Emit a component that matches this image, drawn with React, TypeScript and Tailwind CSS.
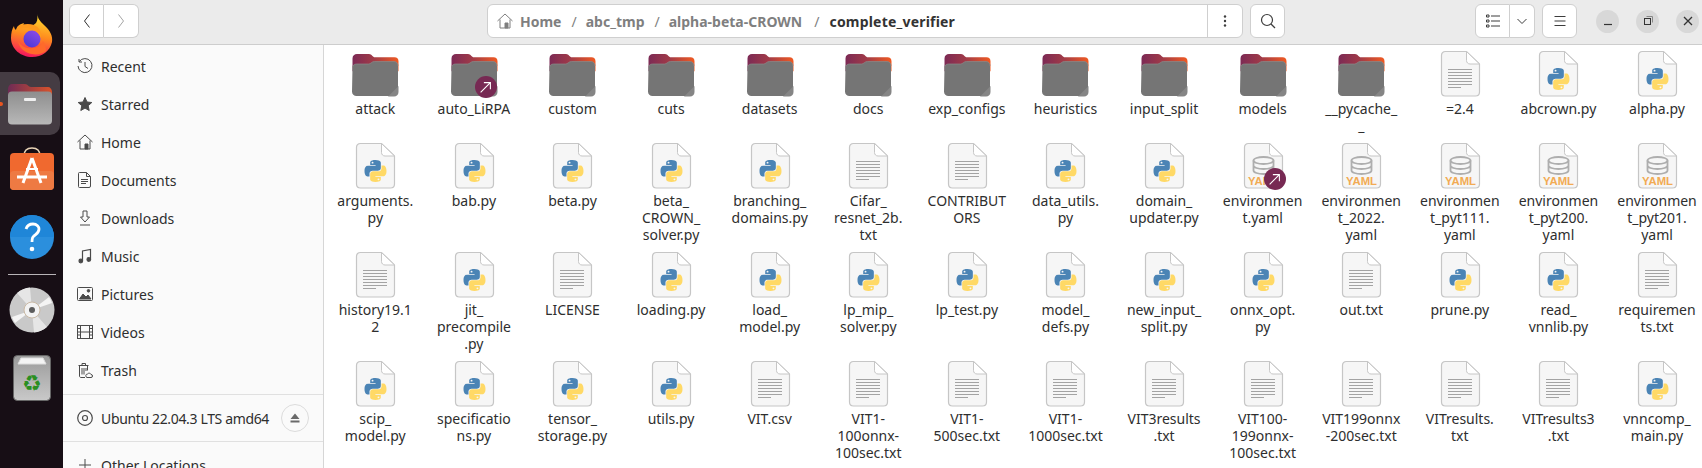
import React from "react";

const font = { fontFamily: '"Noto Sans", "Open Sans", sans-serif' };

type Kind = "folder" | "link" | "text" | "py" | "yaml" | "yamllink";
const rows: [string, Kind][][] = [
  [["attack","folder"],["auto_LiRPA","link"],["custom","folder"],["cuts","folder"],["datasets","folder"],["docs","folder"],["exp_configs","folder"],["heuristics","folder"],["input_split","folder"],["models","folder"],["__pycache_\n_","folder"],["=2.4","text"],["abcrown.py","py"],["alpha.py","py"]],
  [["arguments.\npy","py"],["bab.py","py"],["beta.py","py"],["beta_\nCROWN_\nsolver.py","py"],["branching_\ndomains.py","py"],["Cifar_\nresnet_2b.\ntxt","text"],["CONTRIBUT\nORS","text"],["data_utils.\npy","py"],["domain_\nupdater.py","py"],["environmen\nt.yaml","yamllink"],["environmen\nt_2022.\nyaml","yaml"],["environmen\nt_pyt111.\nyaml","yaml"],["environmen\nt_pyt200.\nyaml","yaml"],["environmen\nt_pyt201.\nyaml","yaml"]],
  [["history19.1\n2","text"],["jit_\nprecompile\n.py","py"],["LICENSE","text"],["loading.py","py"],["load_\nmodel.py","py"],["lp_mip_\nsolver.py","py"],["lp_test.py","py"],["model_\ndefs.py","py"],["new_input_\nsplit.py","py"],["onnx_opt.\npy","py"],["out.txt","text"],["prune.py","py"],["read_\nvnnlib.py","py"],["requiremen\nts.txt","text"]],
  [["scip_\nmodel.py","py"],["specificatio\nns.py","py"],["tensor_\nstorage.py","py"],["utils.py","py"],["VIT.csv","text"],["VIT1-\n100onnx-\n100sec.txt","text"],["VIT1-\n500sec.txt","text"],["VIT1-\n1000sec.txt","text"],["VIT3results\n.txt","text"],["VIT100-\n199onnx-\n100sec.txt","text"],["VIT199onnx\n-200sec.txt","text"],["VITresults.\ntxt","text"],["VITresults3\n.txt","text"],["vnncomp_\nmain.py","py"]],
];

function Badge() {
  return (
    <span className="absolute left-[25px] top-[26px] flex h-[22px] w-[22px] items-center justify-center rounded-full bg-[#772953]">
      <svg width="13" height="13" viewBox="0 0 12 12" fill="none" stroke="#fff" strokeWidth="1">
        <path d="M1.500 10.500 10 2M4.500 1.500h6v6" />
      </svg>
    </span>
  );
}

function Folder({ link }: { link?: boolean }) {
  return (
    <div className="relative h-[48px] w-[48px]">
      <svg width="48" height="48" viewBox="0 0 48 48">
        <defs>
          <linearGradient id="ftab" x1="0" y1="0" x2="1" y2="0">
            <stop offset="0" stopColor="#7c2a55" />
            <stop offset="0.45" stopColor="#a03a48" />
            <stop offset="1" stopColor="#f05a22" />
          </linearGradient>
        </defs>
        <path d="M1.500 8.500c0-3 2-4.500 4.500-4.500h12c3 0 3.500 3.300 6 3.300h19.500c2.500 0 4 1.500 4 4v10H1.500z" fill="url(#ftab)" />
        <path d="M1.500 17.500c0-2 1.500-3.500 4-3.500h12c2.500 0 3-2.500 6-2.500h19.500c2.500 0 4 2 4 4.500v25.500c0 2.800-2 4.500-4.500 4.500h-37c-2.500 0-4.500-1.700-4.500-4.500z" fill="#757575" />
        <path d="M1.500 17.500c0-2 1.500-3.500 4-3.500h12c2.500 0 3-2.500 6-2.500h19.500c2.500 0 4 2 4 4.500" fill="none" stroke="#8a8a8a" strokeWidth="0.7" />
        <path d="M47.500 36v6c0 2.800-2 4.500-4.500 4.500h-6z" fill="#858585" />
      </svg>
      {link && <Badge />}
    </div>
  );
}

function Page({ children }: { children?: React.ReactNode }) {
  return (
    <svg width="48" height="48" viewBox="0 0 48 48" className="absolute inset-0">
      <path d="M9.500 1.500h21l13 12.500v28c0 2.500-1.500 4-4 4h-30c-2.500 0-4-1.500-4-4v-36.500c0-2.500 1.500-4 4-4z" fill="#f6f6f6" stroke="#c6c6c6" strokeWidth="1.200" />
      <path d="M30.500 1.500v9c0 2 1.500 3.500 3.500 3.500h9.500z" fill="#fff" stroke="#c6c6c6" strokeWidth="1" />
      {children}
    </svg>
  );
}

function TextFile() {
  return (
    <div className="relative h-[48px] w-[48px]">
      <Page>
        {[19, 22, 25, 28, 31, 34, 37].map((y) => (
          <path key={y} d={`M12 ${y + 0.5}h${y === 37 ? 13 : 24}`} stroke="#a3a3a3" strokeWidth="1" />
        ))}
      </Page>
    </div>
  );
}

function PyFile() {
  const blue = "M54.900 0C26.800 0 28.600 12.200 28.600 12.200l0 12.600h26.800v3.800H17.900S0 26.600 0 54.900s15.600 27.300 15.600 27.300h9.300V69.100s-.5-15.600 15.400-15.600h26.500s14.900.2 14.900-14.400V14.900S84.100 0 54.900 0zM40.200 8.500a4.800 4.800 0 1 1 0 9.600 4.800 4.800 0 0 1 0-9.600z";
  return (
    <div className="relative h-[48px] w-[48px]">
      <Page>
        <g transform="translate(13.500 18) scale(0.2)">
          <path d={blue} fill="#4b84b5" />
          <path d={blue} fill="#ffd966" transform="rotate(180 55 55)" />
        </g>
      </Page>
    </div>
  );
}

function YamlFile({ link }: { link?: boolean }) {
  return (
    <div className="relative h-[48px] w-[48px]">
      <Page>
        <g fill="none" stroke="#aeaeae" strokeWidth="1.800">
          <ellipse cx="24.500" cy="18.500" rx="10" ry="3.500" />
          <path d="M14.500 18.500v10c0 2 4.500 3.500 10 3.500s10-1.500 10-3.500v-10M14.500 23.500c0 2 4.500 3.500 10 3.500s10-1.500 10-3.500" />
        </g>
        <text x="24.500" y="42.500" textAnchor="middle" fontSize="11" fontWeight="700" textLength="31" lengthAdjust="spacingAndGlyphs" fill="#f2ab53" fontFamily="Liberation Sans, sans-serif">YAML</text>
      </Page>
      {link && <Badge />}
    </div>
  );
}

function FileIcon({ kind }: { kind: Kind }) {
  if (kind === "folder") return <Folder />;
  if (kind === "link") return <Folder link />;
  if (kind === "text") return <TextFile />;
  if (kind === "py") return <PyFile />;
  if (kind === "yaml") return <YamlFile />;
  return <YamlFile link />;
}

const iconProps = { width: 16, height: 16, viewBox: "0 0 16 16", fill: "none", stroke: "#4a4a4a", strokeWidth: 1 } as const;

const sideIcons: Record<string, React.ReactNode> = {
  Recent: <svg {...iconProps}><path d="M2.300 3.500A7 7 0 1 1 1 8M2 1v3h3M8 4v4.500l3 2" /></svg>,
  Starred: <svg {...iconProps} fill="#4a4a4a"><path d="M8 1.500l2 4.500 4.800.5-3.600 3.200 1 4.800L8 12.100 3.800 14.500l1-4.800L1.200 6.500 6 6z" /></svg>,
  Home: <svg {...iconProps}><path d="M.5 8 8 1l7.500 7M3 6.500V15h10V6.500" /><path d="M8 10h3v5H8z" fill="#4a4a4a" /></svg>,
  Documents: <svg {...iconProps}><path d="M2.500.5h7l4 4v9.500a1.500 1.500 0 0 1-1.500 1.500H2.500A1 1 0 0 1 1.500 14.500v-13a1 1 0 0 1 1-1z" /><path d="M9.500.5v4h4M4 7.500h7M4 9.500h7M4 11.500h5" /></svg>,
  Downloads: <svg {...iconProps}><path d="M6 1h4v6h2.500L8 12 3.500 7H6zM3 15h10" /></svg>,
  Music: <svg {...iconProps} strokeWidth="1.200"><path d="M5.500 13V3l8-1.500V11.500" /><circle cx="3.800" cy="13" r="1.800" fill="#4a4a4a" /><circle cx="11.800" cy="11.500" r="1.800" fill="#4a4a4a" /></svg>,
  Pictures: <svg {...iconProps}><rect x=".5" y="1.500" width="15" height="13" rx="1" /><path d="M2.500 13 6 8l3 3 2-2 3 4z" fill="#4a4a4a" /><circle cx="11.500" cy="4.800" r="1.300" fill="#4a4a4a" /></svg>,
  Videos: <svg {...iconProps}><rect x=".5" y="1.500" width="15" height="13" /><path d="M3.500 1.500v13M12.500 1.500v13M3.500 8h9M.5 4.500h3M.5 8h3M.5 11h3M12.500 4.500h3M12.500 8h3M12.500 11h3" /></svg>,
  Trash: <svg {...iconProps}><path d="M1.500 3.500h10M5 3.500V1.500h3.500v2M2.500 3.500v10.500c0 .8.500 1.500 1.500 1.500h4M10.500 3.500v5M5 6v6.500M7 6v6.500M9 6v3" /><path d="M10 15.500a1.800 1.800 0 0 1 .5-3.500 2 2 0 0 1 3.500.5 1.500 1.500 0 0 1 0 3z" /></svg>,
};

function Side({ label, icon }: { label: string; icon: React.ReactNode }) {
  return (
    <div className="flex h-[38px] shrink-0 items-center gap-[8px] pl-[77px]">
      <span className="flex h-[16px] w-[16px] items-center justify-center">{icon}</span>
      <span>{label}</span>
    </div>
  );
}

function Firefox() {
  return (
    <svg width="44" height="44" viewBox="0 0 44 44">
      <defs>
        <linearGradient id="ffa" x1="0.6" y1="0" x2="0.4" y2="1">
          <stop offset="0" stopColor="#ffdf2e" />
          <stop offset="0.5" stopColor="#ff8a1e" />
          <stop offset="0.85" stopColor="#fa3a4a" />
          <stop offset="1" stopColor="#f0125e" />
        </linearGradient>
        <linearGradient id="ffb" x1="0.8" y1="0" x2="0.2" y2="1">
          <stop offset="0" stopColor="#8c4be8" />
          <stop offset="1" stopColor="#4a38d6" />
        </linearGradient>
      </defs>
      <path d="M28 0c-1 4 2 7 6 11 6 5 9 11 8 17-2 9-10 15-20 15C11 43 1 35 1 24c0-5 1-9 3-12 0 2 1 3 2 4 1-4 4-6 8-7-1 2-1 3 0 4 4 0 9-1 12-4 2-3 1-6 2-9z" fill="url(#ffa)" />
      <circle cx="22" cy="25" r="8.500" fill="url(#ffb)" />
      <path d="M6 17c4-3 10-4 14-2 5 1 9 4 11 9 1-6-2-11-7-13-5-2-12-1-16 1z" fill="#ff9a1e" />
      <path d="M36 37c-4 3-9 4-14 3-7-1-13-6-14-13 3 5 8 8 14 7 6 0 9-2 11-7 2 3 3 7 3 10z" fill="#ff6a2a" />
    </svg>
  );
}

function DockFiles() {
  return (
    <svg width="46" height="42" viewBox="0 0 46 42">
      <defs>
        <linearGradient id="dt" x1="0" y1="0" x2="1" y2="0">
          <stop offset="0" stopColor="#6f2b55" />
          <stop offset="1" stopColor="#d9532b" />
        </linearGradient>
        <linearGradient id="db" x1="0" y1="0" x2="0" y2="1">
          <stop offset="0" stopColor="#8e8e8e" />
          <stop offset="1" stopColor="#b8b8b8" />
        </linearGradient>
      </defs>
      <path d="M1 6c0-3 2-5 4-5h13c3 0 3 3 6 3h17c2 0 4 2 4 5v8H1z" fill="url(#dt)" />
      <rect x="1" y="8.500" width="44" height="33" rx="4" fill="url(#db)" />
      <rect x="17" y="15" width="12" height="3" rx="1" fill="#f0f0f0" />
    </svg>
  );
}

function DockStore() {
  return (
    <svg width="46" height="44" viewBox="0 0 46 44">
      <path d="M15 9c0-5 3-8 8-8s8 3 8 8" fill="none" stroke="#e8d3b5" strokeWidth="1.500" />
      <rect x="1" y="6" width="44" height="37" rx="4" fill="#f0692f" />
      <rect x="1" y="24" width="44" height="19" rx="4" fill="#ee7a43" />
      <path d="M23 11 14 36M23 11l9 25M8 30h30" stroke="#fff" strokeWidth="3" fill="none" />
      <path d="M17 22h12" stroke="#fff" strokeWidth="2" />
    </svg>
  );
}

function DockHelp() {
  return (
    <svg width="44" height="44" viewBox="0 0 44 44">
      <circle cx="22" cy="22" r="22" fill="#2b8fdd" />
      <path d="M0 22a22 22 0 0 1 44 0z" fill="#1f86d8" />
      <path d="M16 14c1-3 3-5 7-5 4 0 6 3 6 5 0 4-3 5-5 7-2 1-2 3-2 6" fill="none" stroke="#fff" strokeWidth="2.800" />
      <circle cx="22" cy="34" r="2.300" fill="#fff" />
    </svg>
  );
}

function DockDisc() {
  return (
    <svg width="46" height="46" viewBox="0 0 46 46">
      <circle cx="23" cy="23" r="22.500" fill="#c9c9c9" />
      <path d="M23 23 8 6a22.500 22.500 0 0 1 13-5.500zM23 23l15 17a22.500 22.500 0 0 1-13 5.500z" fill="#e6e6e6" />
      <path d="M23 23 40 10a22.500 22.500 0 0 1 3 6zM23 23 6 36a22.500 22.500 0 0 1-3-6z" fill="#f4f4f4" />
      <circle cx="23" cy="23" r="8" fill="#f3f3f3" stroke="#c9b9a4" />
      <circle cx="23" cy="23" r="3" fill="#5c5c5c" />
    </svg>
  );
}

function DockTrash() {
  return (
    <svg width="38" height="46" viewBox="0 0 38 46">
      <defs>
        <linearGradient id="tr" x1="0" y1="0" x2="0" y2="1">
          <stop offset="0" stopColor="#9a9a9a" />
          <stop offset="1" stopColor="#c9c9c9" />
        </linearGradient>
      </defs>
      <rect x=".5" y=".5" width="37" height="45" rx="4" fill="url(#tr)" stroke="#666" />
      <path d="M5 9 8 3h22l3 6z" fill="#f4f4f4" stroke="#ddd" />
      <text x="19" y="36" textAnchor="middle" fontSize="22" fill="#2a8f22" fontFamily="DejaVu Sans, sans-serif">♻</text>
    </svg>
  );
}

function Btn({ className, children }: { className: string; children?: React.ReactNode }) {
  return <div className={`flex items-center justify-center border border-[#cfcfcf] bg-white ${className}`}>{children}</div>;
}

const hdr = { width: 16, height: 16, viewBox: "0 0 16 16", fill: "none", stroke: "#3d3d3d", strokeWidth: 1 } as const;

function WinBtn({ children }: { children: React.ReactNode }) {
  return <div className="flex h-[23px] w-[23px] items-center justify-center rounded-full bg-[#d8d8d8]">{children}</div>;
}

export default function App() {
  return (
    <div className="flex h-[468px] w-[1702px] overflow-hidden bg-white text-[14px] leading-[17px] text-[#2e2e2e]" style={font}>
      <aside className="relative z-10 flex w-[63px] shrink-0 flex-col items-center bg-[#170e15]">
        <div className="mt-[14px] flex h-[44px] items-center"><Firefox /></div>
        <div className="mt-[14px] flex h-[63px] w-[60px] items-center justify-center self-start rounded-r-[10px] bg-[#453c43]"><DockFiles /></div>
        <div className="mt-[12px] flex h-[44px] items-center"><DockStore /></div>
        <div className="mt-[24px] flex h-[44px] items-center"><DockHelp /></div>
        <div className="mt-[15px] h-px w-[48px] bg-[#b8b4b7]" />
        <div className="mt-[12px] flex h-[46px] items-center"><DockDisc /></div>
        <div className="mt-[22px] flex h-[46px] items-center"><DockTrash /></div>
        <span className="absolute left-0 top-[102px] h-[4px] w-[3px] rounded-r-full bg-[#e95420]" />
      </aside>
      <div className="flex min-w-0 flex-1 flex-col">
        <header className="flex h-[45px] shrink-0 items-center border-b border-[#cdcdcd] bg-[#ebebeb] pb-[2px]">
          <div className="ml-[6px] flex h-[34px]">
            <Btn className="w-[35px] rounded-l-[6px]">
              <svg {...hdr} stroke="#2e2e2e"><path d="M10.500 1.500 5.500 8l5 6.500" /></svg>
            </Btn>
            <Btn className="w-[35px] rounded-r-[6px] border-l-0">
              <svg {...hdr} stroke="#a5a5a5"><path d="M5.500 1.500 10.500 8l-5 6.500" /></svg>
            </Btn>
          </div>
          <div className="ml-[348px] flex h-[34px] w-[756px] rounded-[6px] border border-[#cfcfcf] bg-white">
            <div className="flex flex-1 items-center gap-[7px] pl-[9px] font-bold text-[#7f7f7f]">
              <svg {...hdr} stroke="#7f7f7f"><path d="M.5 8 8 1l7.500 7M3 6.500V15h10V6.500" /><path d="M8 10h3v5H8z" fill="#7f7f7f" /></svg>
              <span>Home</span>
              <span className="ml-[3px] font-normal">/</span>
              <span className="ml-[2px]">abc_tmp</span>
              <span className="ml-[3px] font-normal">/</span>
              <span className="ml-[2px]">alpha-beta-CROWN</span>
              <span className="ml-[5px] font-normal">/</span>
              <span className="ml-[3px] tracking-[0.2px] text-[#333]">complete_verifier</span>
            </div>
            <div className="flex w-[35px] items-center justify-center border-l border-[#cfcfcf]">
              <svg width="4" height="14" viewBox="0 0 4 14" fill="#3d3d3d"><circle cx="2" cy="2.500" r="1.200" /><circle cx="2" cy="7" r="1.200" /><circle cx="2" cy="11.500" r="1.200" /></svg>
            </div>
          </div>
          <Btn className="ml-[7px] h-[34px] w-[35px] rounded-[6px]">
            <svg {...hdr} strokeWidth="1.200"><circle cx="7" cy="7" r="5.500" /><path d="m11 11 4 4" /></svg>
          </Btn>
          <div className="ml-[190px] flex h-[34px]">
            <Btn className="w-[35px] rounded-l-[6px]">
              <svg {...hdr}><path d="M6 3h9M6 8h9M6 13h9M1.500 2h2.500v2H1.500zM1.500 7h2.500v2H1.500zM1.500 12h2.500v2H1.500z" /></svg>
            </Btn>
            <Btn className="w-[25px] rounded-r-[6px] border-l-0">
              <svg width="12" height="12" viewBox="0 0 12 12" fill="none" stroke="#3d3d3d"><path d="m1.500 4 4.500 4.500L10.500 4" /></svg>
            </Btn>
          </div>
          <Btn className="ml-[7px] h-[34px] w-[35px] rounded-[6px]">
            <svg {...hdr}><path d="M2.500 3.500h11M2.500 8h11M2.500 12.500h11" /></svg>
          </Btn>
          <div className="ml-[19px] flex gap-[17px]">
            <WinBtn><svg width="12" height="12" viewBox="0 0 12 12" stroke="#333"><path d="M2 9.500h8" strokeWidth="1.200" /></svg></WinBtn>
            <WinBtn><svg width="12" height="12" viewBox="0 0 12 12" fill="none" stroke="#333"><rect x="2.500" y="3.500" width="6" height="6" /><path d="M4.500 1.500h6v6" stroke="#888" /></svg></WinBtn>
            <WinBtn><svg width="12" height="12" viewBox="0 0 12 12" stroke="#333" strokeWidth="1.300"><path d="m2 2 8 8M10 2l-8 8" /></svg></WinBtn>
          </div>
        </header>
        <div className="flex min-h-0 flex-1">
          <nav className="flex w-[261px] shrink-0 flex-col border-r border-[#d6d6d6] bg-[#fafafa] pt-[2px] [&>div]:ml-[-63px]">
            <Side label="Recent" icon={sideIcons.Recent} />
            <Side label="Starred" icon={sideIcons.Starred} />
            <Side label="Home" icon={sideIcons.Home} />
            <Side label="Documents" icon={sideIcons.Documents} />
            <Side label="Downloads" icon={sideIcons.Downloads} />
            <Side label="Music" icon={sideIcons.Music} />
            <Side label="Pictures" icon={sideIcons.Pictures} />
            <Side label="Videos" icon={sideIcons.Videos} />
            <Side label="Trash" icon={sideIcons.Trash} />
            <div className="mt-[5px] h-px shrink-0 bg-[#e0e0e0]" />
            <div className="flex h-[46px] shrink-0 items-center gap-[8px] pl-[77px]">
              <svg {...iconProps} strokeWidth="1.200"><circle cx="8" cy="8" r="7.300" /><circle cx="8" cy="8" r="2.500" /></svg>
              <span className="flex-1 whitespace-nowrap tracking-[-0.35px]">Ubuntu 22.04.3 LTS amd64</span>
              <span className="mr-[14px] flex h-[28px] w-[28px] items-center justify-center rounded-full border border-[#dcdcdc]">
                <svg width="10" height="10" viewBox="0 0 10 10" fill="#6a6a6a"><path d="M5 0.500 9.500 6h-9zM.5 7.500h9v2h-9z" /></svg>
              </span>
            </div>
            <div className="h-px shrink-0 bg-[#e0e0e0]" />
            <div className="flex h-[46px] shrink-0 items-center gap-[8px] pl-[77px]">
              <svg {...iconProps}><path d="M8 2v12M2 8h12" /></svg>
              <span>Other Locations</span>
            </div>
          </nav>
          <main className="flex-1 overflow-hidden pl-[2px] pt-[5px]">
            <div className="grid grid-cols-[repeat(14,98.6px)] gap-y-[8px]">
              {rows.flat().map(([name, kind], i) => (
                <div key={i} className="flex flex-col items-center">
                  <FileIcon kind={kind} />
                  <div className="mt-[2px] whitespace-pre-line text-center">{name}</div>
                </div>
              ))}
            </div>
          </main>
        </div>
      </div>
    </div>
  );
}
